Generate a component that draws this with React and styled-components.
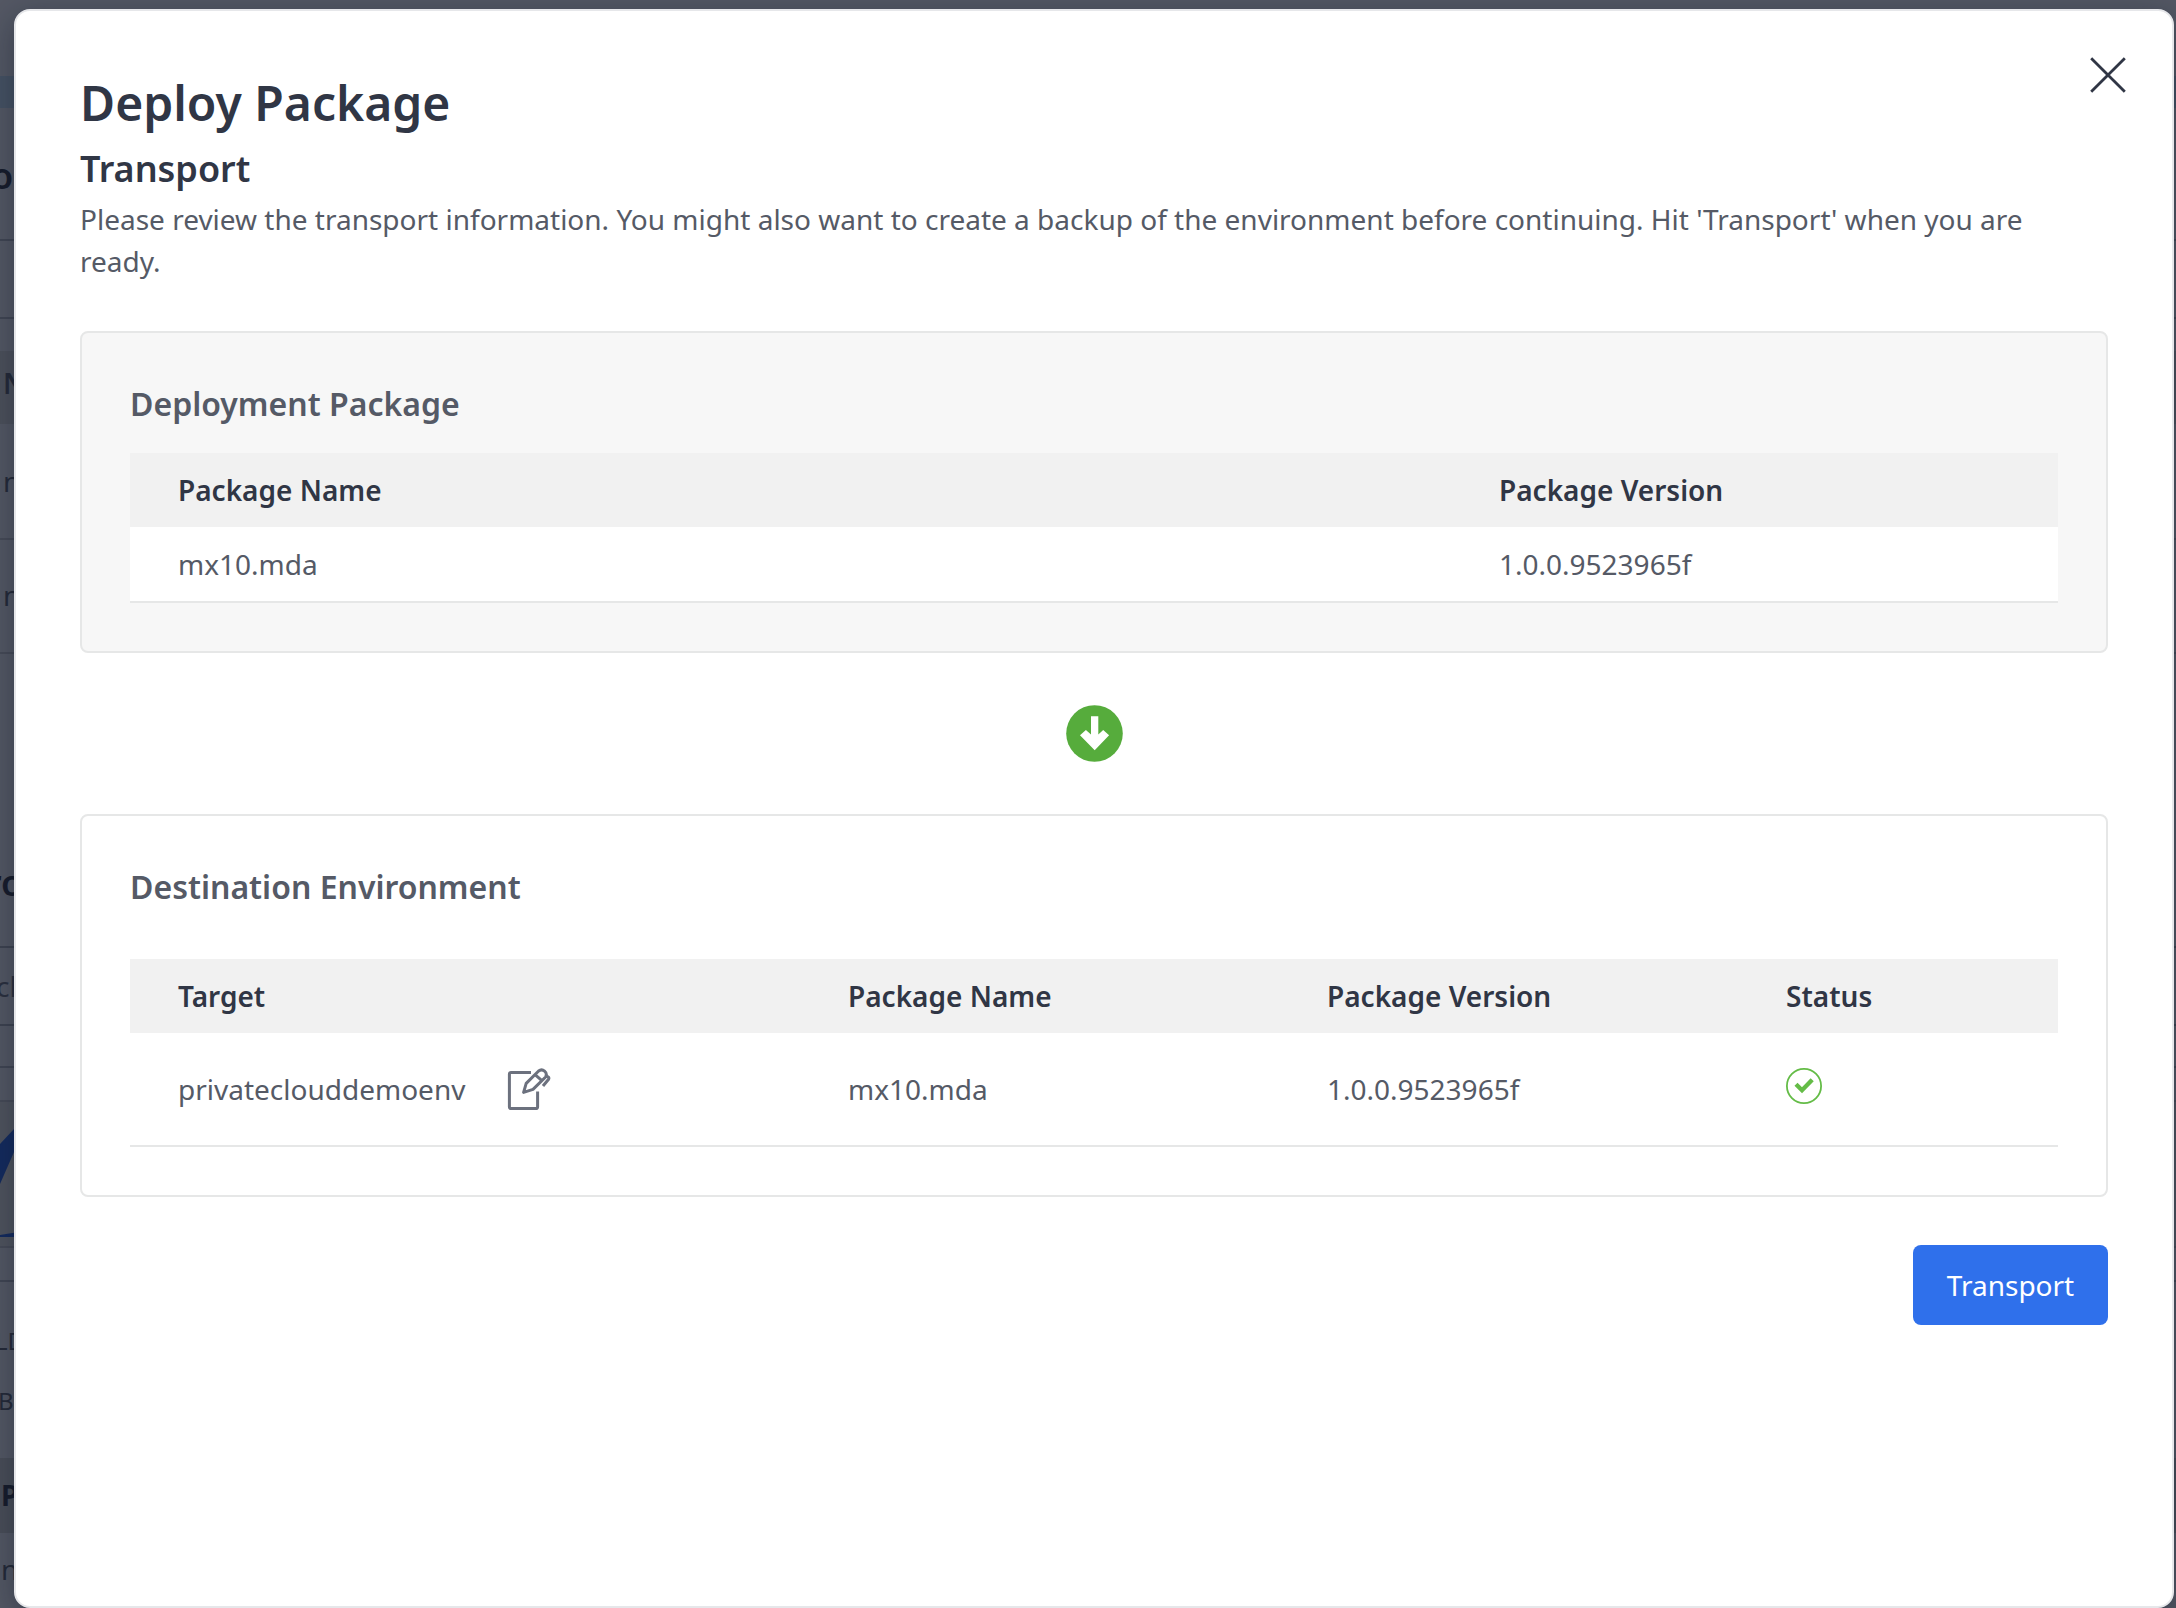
import React from "react";
import styled, { createGlobalStyle } from "styled-components";

const Global = createGlobalStyle`
  *, *::before, *::after { box-sizing: border-box; }
  html, body { margin: 0; height: 100%; overflow: hidden; }
  body { font-family: "Noto Sans", "Open Sans", sans-serif; font-size: 28px; line-height: 42px; color: #555a66; }
  h1, h2, h3, p { margin: 0; }
`;

const Screen = styled.div`
  display: grid;
  width: 2176px;
  height: 1608px;
  overflow: hidden;
  background: #545864;
  > * { grid-area: 1 / 1; }
`;

const Backdrop = styled.div`
  display: flex;
  flex-direction: column;
  height: 1608px;
  overflow: hidden;
`;

const Band = styled.div`
  flex: none;
  display: flex;
  align-items: flex-start;
  height: ${(p) => p.$h}px;
  background: ${(p) => p.$bg || "transparent"};
  border-bottom: ${(p) => (p.$line ? `2px solid ${p.$line}` : "none")};
`;

const Ghost = styled.span`
  font-size: ${(p) => p.$size || 28}px;
  font-weight: ${(p) => p.$weight || 400};
  line-height: 40px;
  margin-top: ${(p) => p.$top}px;
  margin-left: ${(p) => p.$left}px;
  color: ${(p) => p.$color || "#252a38"};
  white-space: nowrap;
`;

const Dialog = styled.section`
  z-index: 1;
  margin: 9px 2px 0 14px;
  height: 1599px;
  padding: 63px 64px 0;
  display: flex;
  flex-direction: column;
  background: #fff;
  border: 2px solid #e6e7ea;
  border-radius: 16px;
  box-shadow: 0 8px 32px rgba(10, 19, 37, 0.4);
`;

const Header = styled.header`
  display: flex;
  justify-content: space-between;
  align-items: flex-start;
  height: 65px;
`;

const Title = styled.h1`
  font-size: 48px;
  line-height: 58px;
  font-weight: 600;
  color: #303645;
`;

const Close = styled.button`
  width: 36px;
  height: 36px;
  padding: 0;
  border: 0;
  background: none;
  margin: -17px -18px 0 0;
  svg { display: block; }
`;

const Subtitle = styled.h2`
  height: 59px;
  font-size: 36px;
  line-height: 60px;
  font-weight: 600;
  color: #303645;
`;

const Intro = styled.p`
  height: 84px;
  width: 2000px;
  margin-bottom: 49px;
`;

const Card = styled.section`
  height: ${(p) => p.$h}px;
  flex: none;
  display: flex;
  flex-direction: column;
  justify-content: space-between;
  padding: 48px;
  border: 2px solid #e6e7e7;
  border-radius: 8px;
  background: ${(p) => p.$bg};
`;

const CardTitle = styled.h3`
  font-size: 32px;
  line-height: 46px;
  font-weight: 600;
  color: #555a66;
`;

const Table = styled.div`
  display: flex;
  flex-direction: column;
`;

const Row = styled.div`
  display: grid;
  grid-template-columns: ${(p) => p.$cols};
  align-items: center;
  height: ${(p) => p.$h}px;
  padding-left: 48px;
  background: #fff;
  border-bottom: 2px solid #e6e7e7;
`;

const HeadRow = styled(Row)`
  height: 74px;
  background: #f1f1f1;
  border-bottom: 0;
  font-weight: 600;
  color: #303645;
`;

const Cell = styled.div`
  display: flex;
  align-items: center;
  gap: 42px;
`;

const StatusCell = styled(Cell)`
  padding-bottom: 6px;
`;

const ArrowRow = styled.div`
  display: flex;
  justify-content: center;
  align-items: center;
  height: 161px;
`;

const Footer = styled.footer`
  display: flex;
  justify-content: flex-end;
  margin-top: 48px;
`;

const Primary = styled.button`
  width: 195px;
  height: 80px;
  padding: 0;
  border: 0;
  border-radius: 8px;
  background: #2f70eb;
  color: #fff;
  font: 400 28px/42px "Noto Sans", "Open Sans", sans-serif;
`;

const CloseIcon = () => (
  <svg width="36" height="36" viewBox="0 0 36 36" fill="none" stroke="#303645" strokeWidth="2.8">
    <path d="M1.2 1.2 34.8 34.8M34.8 1.2 1.2 34.8" />
  </svg>
);

const ArrowDown = () => (
  <svg width="57" height="57" viewBox="0 0 57 57">
    <circle cx="28.5" cy="28.5" r="28.3" fill="#56ac3c" />
    <path fill="#fff" d="M25 11.3h7.3v18.2l4.9-4.6 5.9 5.3-14.4 15-14.7-15 5.9-5.3 5.1 4.6z" />
  </svg>
);

const EditIcon = () => (
  <svg width="44" height="44" viewBox="0 0 44 44" fill="none" stroke="#6c717e" strokeWidth="3" strokeLinejoin="round">
    <path d="M24 5.4H4a1.6 1.6 0 0 0-1.6 1.6V40a1.6 1.6 0 0 0 1.6 1.6H29a1.6 1.6 0 0 0 1.6-1.6V24.6" />
    <path d="m16.6 25.4 2.6-9L31.6 4a4.7 4.7 0 0 1 7 6L26 22.4z" />
    <path d="m28.6 8.2 6.6 5.6M38.8 8.8l2.2 1.1a1.6 1.6 0 0 1 .6 2.4L36 19" />
  </svg>
);

const CheckIcon = () => (
  <svg width="36" height="36" viewBox="0 0 36 36" fill="none" stroke="#64bc47">
    <circle cx="18" cy="18" r="17.1" strokeWidth="1.8" />
    <path d="m10 16.3 6 6 10.2-10.5" strokeWidth="4.3" />
  </svg>
);

const TrendIcon = () => (
  <svg width="14" height="144" viewBox="0 0 14 144">
    <path fill="#142b5e" d="M0 42 14 27v23L0 82zM0 133l14-2.3v4.3H0z" />
  </svg>
);

const PACKAGE_COLS = "1321px 1fr";
const TARGET_COLS = "670px 479px 459px 1fr";

export default function App() {
  return (
    <>
      <Global />
      <Screen>
        <Backdrop>
          <Band $h={76} />
          <Band $h={32} $bg="#465263" />
          <Band $h={133} $line="#414653">
            <Ghost $size={36} $weight={600} $top={48} $left={-9} $color="#171c2b">o</Ghost>
          </Band>
          <Band $h={78} $line="#414653" />
          <Band $h={32} />
          <Band $h={73} $bg="#4d515b">
            <Ghost $weight={600} $top={12} $left={3}>N</Ghost>
          </Band>
          <Band $h={116} $line="#474b57">
            <Ghost $top={37} $left={3}>n</Ghost>
          </Band>
          <Band $h={114} $line="#474b57">
            <Ghost $top={35} $left={3}>n</Ghost>
          </Band>
          <Band $h={294} $line="#3e4350">
            <Ghost $size={36} $weight={600} $top={209} $left={-14} $color="#171c2b">ro</Ghost>
          </Band>
          <Band $h={78} $line="#3e4350">
            <Ghost $top={18} $left={-4} $color="#2b303e">cl</Ghost>
          </Band>
          <Band $h={42} $line="#414653" />
          <Band $h={34} $line="#474b57" />
          <Band $h={146} $line="#474b57" $bg="#50545e">
            <TrendIcon />
          </Band>
          <Band $h={34} $line="#414653" />
          <Band $h={176}>
            <Ghost $size={24} $top={39} $left={-5}>LD</Ghost>
            <Ghost $size={24} $top={99} $left={-27}>B</Ghost>
          </Band>
          <Band $h={75} $bg="#4a4e58">
            <Ghost $weight={700} $top={17} $left={1} $color="#171c2b">P</Ghost>
          </Band>
          <Band $h={75}>
            <Ghost $top={16} $left={1}>n</Ghost>
          </Band>
        </Backdrop>
        <Dialog>
          <Header>
            <Title>Deploy Package</Title>
            <Close aria-label="Close"><CloseIcon /></Close>
          </Header>
          <Subtitle>Transport</Subtitle>
          <Intro>
            Please review the transport information. You might also want to create a backup of the
            environment before continuing. Hit 'Transport' when you are ready.
          </Intro>
          <Card $h={322} $bg="#f7f7f7">
            <CardTitle>Deployment Package</CardTitle>
            <Table>
              <HeadRow $cols={PACKAGE_COLS}>
                <Cell>Package Name</Cell>
                <Cell>Package Version</Cell>
              </HeadRow>
              <Row $cols={PACKAGE_COLS} $h={76}>
                <Cell>mx10.mda</Cell>
                <Cell>1.0.0.9523965f</Cell>
              </Row>
            </Table>
          </Card>
          <ArrowRow><ArrowDown /></ArrowRow>
          <Card $h={383} $bg="#fff">
            <CardTitle>Destination Environment</CardTitle>
            <Table>
              <HeadRow $cols={TARGET_COLS}>
                <Cell>Target</Cell>
                <Cell>Package Name</Cell>
                <Cell>Package Version</Cell>
                <Cell>Status</Cell>
              </HeadRow>
              <Row $cols={TARGET_COLS} $h={114}>
                <Cell>privateclouddemoenv<EditIcon /></Cell>
                <Cell>mx10.mda</Cell>
                <Cell>1.0.0.9523965f</Cell>
                <StatusCell><CheckIcon /></StatusCell>
              </Row>
            </Table>
          </Card>
          <Footer><Primary>Transport</Primary></Footer>
        </Dialog>
      </Screen>
    </>
  );
}
